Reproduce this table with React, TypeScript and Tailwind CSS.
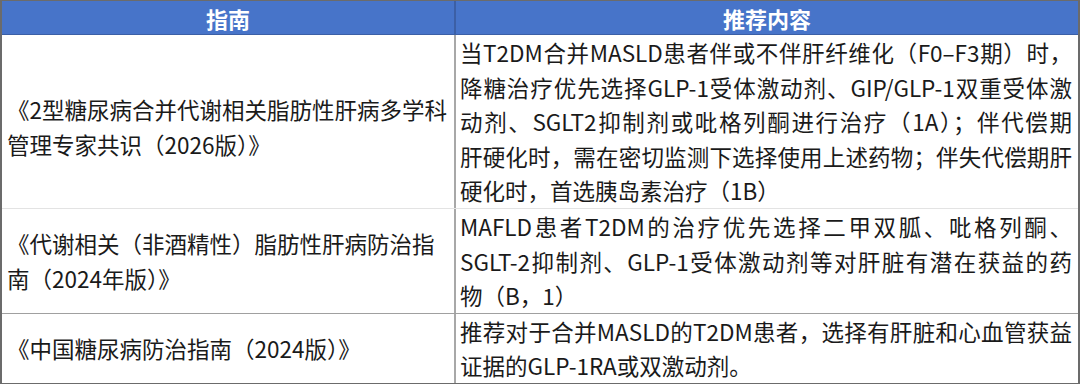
import React from "react";

const font = { fontFamily: '"Noto Sans CJK SC", "Noto Sans", sans-serif' };

function JLines({ lines }: { lines: string[] }) {
  return (
    <>
      {lines.map((l, i) => (
        <div
          key={i}
          className={
            i < lines.length - 1
              ? "whitespace-nowrap text-justify [text-align-last:justify]"
              : "whitespace-nowrap text-left"
          }
        >
          {l}
        </div>
      ))}
    </>
  );
}

export default function App() {
  return (
    <div className="w-[1080px] h-[384px] bg-white overflow-hidden" style={font}>
      <div className="w-[1080px] border-l-2 border-r-2 border-b-2 border-t border-[#6b6b6b] text-[22.5px] text-[#1a1a1a]">
        <div className="grid grid-cols-[454px_1fr] h-[34px] bg-[#4774c9] text-white font-bold text-[22px] leading-[34px] border-b border-[#3b5fa6]">
          <div className="text-center border-r-2 border-[#3c5fa5]">指南</div>
          <div className="text-center">推荐内容</div>
        </div>
        <div className="grid grid-cols-[454px_1fr] border-b border-[#e3e3e3]">
          <div className="flex items-center border-r-2 border-[#a8a8a8] pl-[5px] pt-[12px] leading-[35px]">
            <div>
              <div className="whitespace-nowrap">《2型糖尿病合并代谢相关脂肪性肝病多学科</div>
              <div className="whitespace-nowrap">管理专家共识（2026版）》</div>
            </div>
          </div>
          <div className="pl-[4px] pr-[6px] leading-[34.6px]">
            <JLines
              lines={[
                "当T2DM合并MASLD患者伴或不伴肝纤维化（F0–F3期）时，",
                "降糖治疗优先选择GLP-1受体激动剂、GIP/GLP-1双重受体激",
                "动剂、SGLT2抑制剂或吡格列酮进行治疗（1A）；伴代偿期",
                "肝硬化时，需在密切监测下选择使用上述药物；伴失代偿期肝",
                "硬化时，首选胰岛素治疗（1B）",
              ]}
            />
          </div>
        </div>
        <div className="grid grid-cols-[454px_1fr] border-b border-[#a0a0a0]">
          <div className="flex items-center border-r-2 border-[#a8a8a8] pl-[5px] leading-[35px]">
            <div>
              <div className="whitespace-nowrap">《代谢相关（非酒精性）脂肪性肝病防治指</div>
              <div className="whitespace-nowrap">南（2024年版）》</div>
            </div>
          </div>
          <div className="pl-[4px] pr-[6px] leading-[34.6px]">
            <JLines
              lines={[
                "MAFLD患者T2DM的治疗优先选择二甲双胍、吡格列酮、",
                "SGLT-2抑制剂、GLP-1受体激动剂等对肝脏有潜在获益的药",
                "物（B，1）",
              ]}
            />
          </div>
        </div>
        <div className="grid grid-cols-[454px_1fr]">
          <div className="flex items-center border-r-2 border-[#a8a8a8] pl-[5px] leading-[35px]">
            <div className="whitespace-nowrap">《中国糖尿病防治指南（2024版）》</div>
          </div>
          <div className="pl-[4px] pr-[6px] leading-[34.6px]">
            <JLines
              lines={[
                "推荐对于合并MASLD的T2DM患者，选择有肝脏和心血管获益",
                "证据的GLP-1RA或双激动剂。",
              ]}
            />
          </div>
        </div>
      </div>
    </div>
  );
}
